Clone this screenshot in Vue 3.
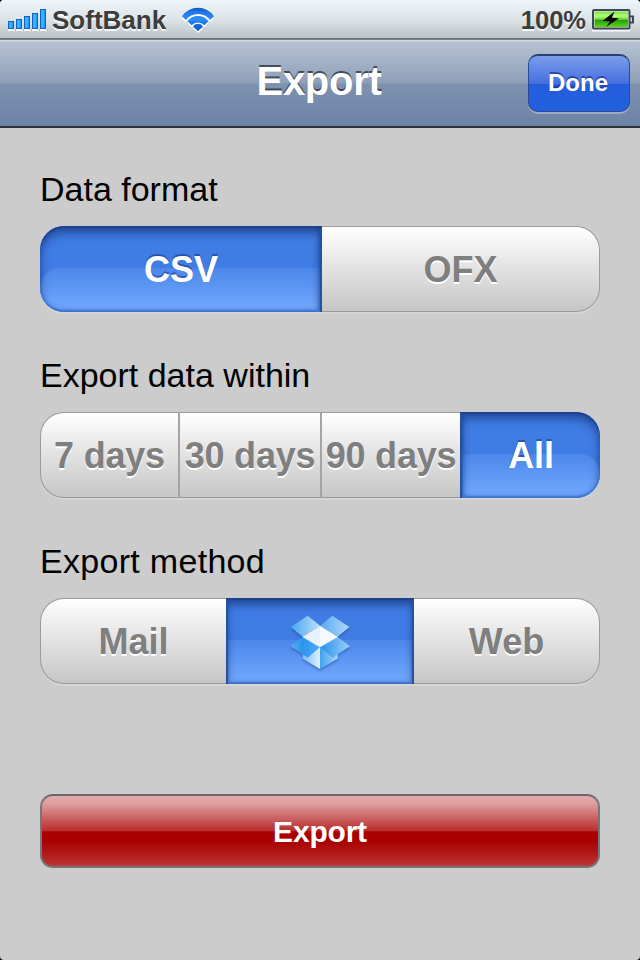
<script setup>
import { ref } from 'vue'

const bars = [8, 10, 13, 16, 20]

const groups = ref([
  {
    title: 'Data format',
    kind: 'two',
    selected: 0,
    options: ['CSV', 'OFX'],
  },
  {
    title: 'Export data within',
    kind: 'four',
    selected: 3,
    options: ['7 days', '30 days', '90 days', 'All'],
  },
  {
    title: 'Export method',
    kind: 'three',
    selected: 1,
    options: ['Mail', 'Dropbox', 'Web'],
  },
])
</script>

<template>
  <main class="screen">
    <div class="status">
      <div class="bars">
        <i v-for="h in bars" :key="h" :style="{ height: h + 'px' }"></i>
      </div>
      <span class="carrier">SoftBank</span>
      <svg class="wifi" width="34" height="27" viewBox="0 0 34 27">
        <defs>
          <linearGradient id="wf" x1="0" y1="0" x2="0" y2="24" gradientUnits="userSpaceOnUse">
            <stop offset="0" stop-color="#0f4fb4" />
            <stop offset=".2" stop-color="#1f74e4" />
            <stop offset=".5" stop-color="#2b90f8" />
            <stop offset=".7" stop-color="#1b6fe4" />
            <stop offset="1" stop-color="#0a50d0" />
          </linearGradient>
          <g id="waves">
            <path d="M1 9.2A19.5 19.5 0 0 1 33 9.2L29.2 13A15.5 15.5 0 0 0 4.8 13Z" />
            <path d="M6.6 14.2A13 13 0 0 1 27.4 14.2L23.4 18.2A8.8 8.8 0 0 0 10.6 18.2Z" />
            <path d="M12.3 19.2A5.6 5.6 0 0 1 21.7 19.2Q21.6 20.2 17 24Q12.4 20.2 12.3 19.2Z" />
          </g>
        </defs>
        <use href="#waves" y="2" fill="#fff" />
        <use href="#waves" fill="url(#wf)" />
      </svg>
      <span class="percent">100%</span>
      <svg class="battery" width="43" height="24" viewBox="0 0 43 24">
        <defs>
          <linearGradient id="bt" x1="0" y1="0" x2="0" y2="1">
            <stop offset="0" stop-color="#7be04a" />
            <stop offset=".3" stop-color="#b4fa7c" />
            <stop offset=".5" stop-color="#6fd63a" />
            <stop offset=".56" stop-color="#2a9c0c" />
            <stop offset="1" stop-color="#57d81e" />
          </linearGradient>
        </defs>
        <path d="M0 21.5H38" stroke="#fff" stroke-width="2" opacity=".8" />
        <path d="M38 7.5h3v6h-3" fill="#d5dade" stroke="#42465c" stroke-width="2" />
        <rect x="1" y="1" width="36.5" height="18.5" rx="1" fill="#e2f5dc" stroke="#42465c" stroke-width="2" />
        <rect x="2.5" y="2.5" width="33.5" height="15.5" fill="url(#bt)" />
        <path d="M22.5 2.5L10.5 12L18 12.5L14 18L27 9.2L19.8 8.8Z" fill="#050505" />
      </svg>
    </div>

    <header class="nav">
      <h1>Export</h1>
      <button class="done">Done</button>
    </header>

    <div class="content">
      <section v-for="g in groups" :key="g.title" :class="'group-' + g.kind">
        <h2>{{ g.title }}</h2>
        <div class="segments" :class="g.kind">
          <button
            v-for="(o, i) in g.options"
            :key="o"
            class="segment"
            :class="{ on: g.selected === i }"
            @click="g.selected = i"
          >
            <svg v-if="o === 'Dropbox'" class="dropbox" width="60.7" height="56" viewBox="60 76 182 168">
              <defs>
                <linearGradient id="fl" x1="0" x2="1" y1="0" y2="0">
                  <stop offset="0" stop-color="#45a5f2" />
                  <stop offset="1" stop-color="#c0dffa" />
                </linearGradient>
                <linearGradient id="fr" x1="0" x2="1" y1="0" y2="0">
                  <stop offset="0" stop-color="#55aaf2" />
                  <stop offset="1" stop-color="#b0d8fa" />
                </linearGradient>
                <linearGradient id="bl" x1="0" x2="1" y1="0" y2="0">
                  <stop offset="0" stop-color="#7cc0f8" />
                  <stop offset="1" stop-color="#dceffd" />
                </linearGradient>
                <linearGradient id="br" x1="0" x2="1" y1="0" y2="0">
                  <stop offset="0" stop-color="#3fa2f1" />
                  <stop offset="1" stop-color="#a8d5fb" />
                </linearGradient>
                <linearGradient id="ll" x1="0" x2="1" y1="0" y2="0">
                  <stop offset="0" stop-color="#58b2f5" />
                  <stop offset=".4" stop-color="#2b95ed" />
                  <stop offset="1" stop-color="#51aaf3" />
                </linearGradient>
                <linearGradient id="lr" x1="0" x2="1" y1="0" y2="0">
                  <stop offset="0" stop-color="#2790eb" />
                  <stop offset="1" stop-color="#9bd0fa" />
                </linearGradient>
              </defs>
              <path d="M98 141L150 172V238L98 207Z" fill="url(#bl)" />
              <path d="M203 141L150 172V238L203 207Z" fill="url(#br)" />
              <path d="M62 112L113 78L150 108L98 141Z" fill="url(#fl)" />
              <path d="M187 78L238 112L203 141L150 108Z" fill="url(#fr)" />
              <path d="M62 170L98 142L150 172L113 204Z" fill="url(#ll)" />
              <path d="M203 142L240 170L187 204L150 172Z" fill="url(#lr)" />
              <path d="M150 108L98 141L150 172Z" fill="#e6f2fd" />
              <path d="M150 108L203 141L150 172Z" fill="#f5faff" />
              <path d="M98 141L150 172L203 141" fill="none" stroke="#fff" stroke-width="2" opacity=".7" />
            </svg>
            <span v-else>{{ o }}</span>
          </button>
        </div>
      </section>
      <button class="export">Export</button>
    </div>
  </main>
</template>

<style>
body {
  margin: 0;
  background: #000;
}
</style>

<style scoped>
* {
  box-sizing: border-box;
}
.screen {
  width: 640px;
  height: 960px;
  overflow: hidden;
  border-radius: 4px;
  background: #ccc;
  font-family: "Liberation Sans", Arial, sans-serif;
}
button {
  padding: 0;
  margin: 0;
  border: 0;
  font-family: inherit;
  font-weight: bold;
  white-space: nowrap;
}
.status {
  height: 40px;
  display: flex;
  align-items: flex-start;
  padding: 0 5px 0 8px;
  background: linear-gradient(#eff5f8, #dce3e6 50%, #bdc5c8 37px, #bdc5c8 38px, #626d70 38px, #697276 39px, #90989c 40px);
  color: #3d3d3d;
  font-size: 26px;
  font-weight: bold;
  line-height: 40px;
  text-shadow: 0 2px 0 rgba(255, 255, 255, 0.8);
}
.bars {
  display: flex;
  align-items: flex-end;
  gap: 2px;
  height: 20px;
  margin-top: 9px;
}
.bars i {
  width: 6px;
  border: 1px solid #1462c8;
  background: linear-gradient(90deg, #2ba6f8, #35c3ff 50%, #1c86f0);
  box-shadow: 0 2px 0 #fff;
}
.carrier {
  margin-left: 6px;
}
.wifi {
  margin: 7px 0 0 15px;
}
.percent {
  margin-left: auto;
  font-size: 25.5px;
}
.battery {
  margin: 9px 0 0 6px;
  flex: none;
}
.nav {
  height: 88px;
  display: grid;
  grid-template-columns: 1fr auto 1fr;
  align-items: start;
  padding: 14px 10px 0;
  border-bottom: 2px solid #2d3034;
  background: linear-gradient(#d2d9e0 0, #d2d9e0 1px, #b5c2d2 2px, #8e9fb8 43px, #7e92b0 44px, #6c83a6 86px);
}
h1 {
  grid-column: 2;
  margin: 0 2px 0 0;
  font-size: 40px;
  line-height: 54px;
  letter-spacing: -0.3px;
  color: #fff;
  text-shadow: 0 -2px 0 rgba(35, 45, 60, 0.75);
}
.done {
  justify-self: end;
  width: 102px;
  height: 58px;
  padding: 0 2px 2px 0;
  border: 1px solid #2a4a98;
  border-top: 2px solid #2b3f72;
  border-radius: 10px;
  background: linear-gradient(#7b9deb, #456fdf 50%, #245ddc 51%, #2161e0);
  box-shadow: 0 2px 0 rgba(255, 255, 255, 0.3);
  color: #fff;
  font-size: 24px;
  line-height: 52px;
  text-shadow: 0 -2px 0 rgba(15, 40, 110, 0.6);
}
.content {
  display: flex;
  flex-direction: column;
  gap: 42px;
  padding: 40px 40px 0;
}
h2 {
  margin: 0 0 16px;
  font-size: 34px;
  font-weight: normal;
  line-height: 42px;
  color: #000;
}
.group-three h2 {
  letter-spacing: 0.3px;
}
.segments {
  display: grid;
  height: 86px;
  border-radius: 24px;
  box-shadow: 0 2px 0 #d6d6d6;
}
.two {
  grid-template-columns: 282px 278px;
}
.three {
  grid-template-columns: 186px 188px 186px;
}
.four {
  grid-template-columns: 140px 142px 138px 140px;
}
.segment {
  position: relative;
  display: flex;
  align-items: center;
  justify-content: center;
  border: solid #9b9b9b;
  border-width: 1px 0;
  background: linear-gradient(#fff, #f0f0f0 25%, #c6c6c6);
  color: #7f7f7f;
  font-size: 36px;
  line-height: 82px;
  text-shadow: 0 2px 0 #fff;
}
.segment span {
  position: relative;
  padding-top: 2px;
}
.four span {
  letter-spacing: -0.2px;
}
.segment:first-child {
  border-left-width: 1px;
  border-radius: 24px 0 0 24px;
}
.segment:last-child {
  border-right-width: 1px;
  border-radius: 0 24px 24px 0;
}
.four .segment:nth-child(-n + 2) {
  border-right: 2px solid #a4a4a4;
}
.segment.on {
  border: 0;
  overflow: hidden;
  background: #3f7ce4;
  color: #fff;
  text-shadow: 0 -2px 0 rgba(20, 50, 120, 0.55);
}
.four .segment.on {
  padding-left: 2px;
}
.segment.on::before {
  content: "";
  position: absolute;
  inset: 42px 0 0;
  background: linear-gradient(#4c87ea, #73a9ff);
}
.segment.on:first-child::before {
  border-top-left-radius: 20px;
}
.segment.on:last-child::before {
  border-top-right-radius: 20px;
}
.segment.on::after {
  content: "";
  position: absolute;
  inset: 0;
  border-radius: inherit;
  box-shadow: inset 0 2px 0 #1b438f, inset 0 -2px 1px #3c78d5, inset 0 7px 10px rgba(20, 45, 110, 0.6), inset 0 0 4px rgba(20, 55, 130, 0.6);
}
.two .on:first-child::after {
  box-shadow: inset 0 2px 0 #1b438f, inset -2px 0 1px #24529f, inset 0 -2px 1px #3c78d5, inset 0 7px 10px rgba(20, 45, 110, 0.6), inset -2px 0 6px rgba(20, 55, 130, 0.7);
}
.four .on:last-child::after {
  box-shadow: inset 0 2px 0 #1b438f, inset 2px 0 1px #24529f, inset 0 -2px 1px #3c78d5, inset 0 7px 10px rgba(20, 45, 110, 0.6), inset 2px 0 6px rgba(20, 55, 130, 0.7);
}
.three .on::after {
  box-shadow: inset 0 2px 0 #1b438f, inset 2px 0 1px #24529f, inset -2px 0 1px #24529f, inset 0 -2px 1px #3c78d5, inset 0 7px 10px rgba(20, 45, 110, 0.6), inset 0 0 6px rgba(20, 55, 130, 0.6);
}
.dropbox {
  position: relative;
  margin-top: 4px;
  filter: drop-shadow(0 2px 1px rgba(20, 60, 130, 0.4));
}
.export {
  height: 74px;
  margin-top: 68px;
  padding: 2px 0 0;
  border: 2px solid #777578;
  border-top-color: #68696e;
  border-radius: 13px;
  background: linear-gradient(#e5abab, #dfa0a0 10%, #b92c2c 50%, #aa0000 51%, #a90000 64%, #b92e2e 96%, #b94040);
  color: #fff;
  font-size: 30px;
  line-height: 68px;
  letter-spacing: -0.2px;
}
</style>
